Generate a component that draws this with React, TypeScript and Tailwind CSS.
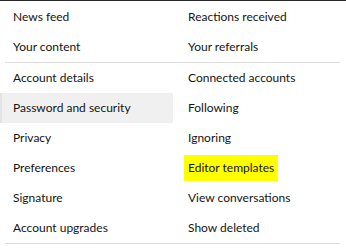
import React from "react";

const left1 = ["News feed", "Your content"];
const right1 = ["Reactions received", "Your referrals"];
const left2 = ["Account details", "Password and security", "Privacy", "Preferences", "Signature", "Account upgrades"];
const right2 = ["Connected accounts", "Following", "Ignoring", "Editor templates", "View conversations", "Show deleted"];

function Cell({ text, side }: { text: string; side: "l" | "r" }) {
  const hover = text === "Password and security";
  const yellow = text === "Editor templates";
  let cls = "h-[30px] flex items-center ";
  if (hover) cls += "bg-[#f0f0f0] border-l-2 border-[#e4e4e4] pl-[11px]";
  else if (side === "l") cls += "pl-[13px]";
  else cls += "pl-[15px]";
  return (
    <div className={cls}>
      {yellow ? (
        <span className="bg-[#ffff00] px-[4px] -ml-[4px] py-[4px]">{text}</span>
      ) : (
        <span>{text}</span>
      )}
    </div>
  );
}

export default function App() {
  return (
    <div
      className="w-[346px] h-[249px] bg-white text-[#141414] text-[12px] overflow-hidden"
      style={{ fontFamily: 'Lato, "Noto Sans", sans-serif' }}
    >
      <div className="h-px bg-[#2a2a2a]" />
      <div className="h-px" />
      <div className="grid grid-cols-[173px_173px]">
        <div>
          {left1.map((t) => (
            <Cell key={t} text={t} side="l" />
          ))}
        </div>
        <div>
          {right1.map((t) => (
            <Cell key={t} text={t} side="r" />
          ))}
        </div>
      </div>
      <div className="mx-[5px] w-[335px] h-px bg-[#dcdcdc]" />
      <div className="grid grid-cols-[173px_173px]">
        <div>
          {left2.map((t) => (
            <Cell key={t} text={t} side="l" />
          ))}
        </div>
        <div>
          {right2.map((t) => (
            <Cell key={t} text={t} side="r" />
          ))}
        </div>
      </div>
      <div className="mx-[5px] w-[335px] h-px bg-[#dcdcdc]" />
    </div>
  );
}
